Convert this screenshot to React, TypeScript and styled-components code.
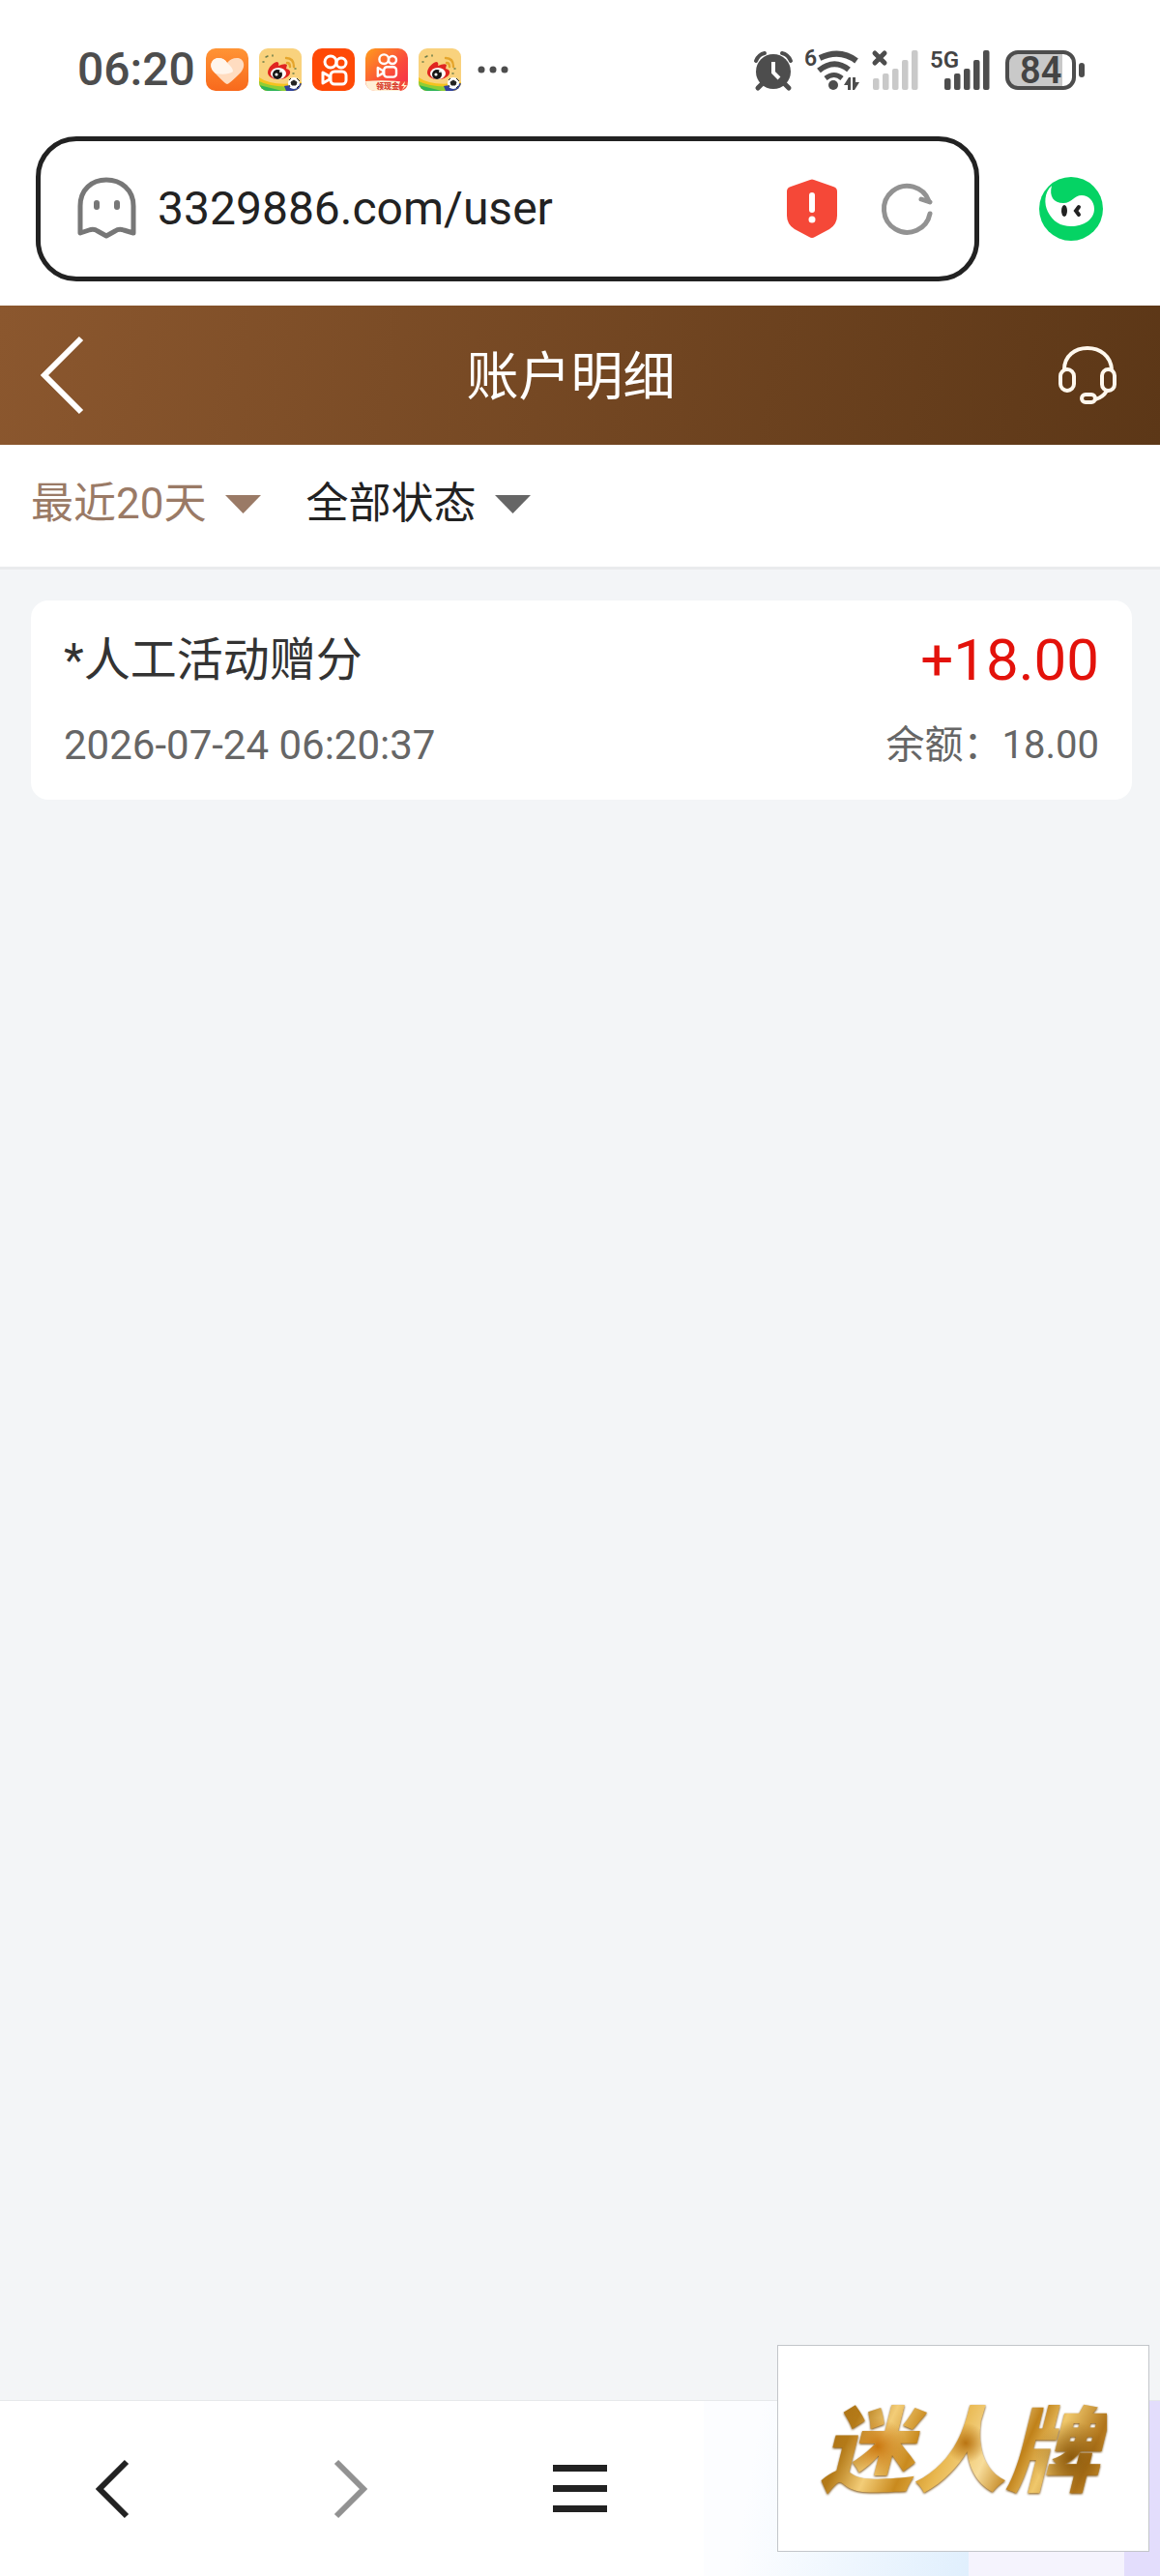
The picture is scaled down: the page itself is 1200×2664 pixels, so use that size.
import { useState } from "react";
import styled, { createGlobalStyle } from "styled-components";

const ink = "#4d4d4d";

const records = [
  { id: 1, title: "*人工活动赠分", amount: "+18.00", time: "2026-07-24 06:20:37", balance: "18.00" },
];

export default function App() {
  return (
    <Page>
      <GlobalStyle />
      <StatusBar />
      <AddressBar />
      <Header />
      <Filters />
      <List>
        {records.map((item) => (
          <Card key={item.id}>
            <CardRow>
              <CardTitle>{item.title}</CardTitle>
              <Amount>{item.amount}</Amount>
            </CardRow>
            <CardRow>
              <Time>{item.time}</Time>
              <Balance>余额：{item.balance}</Balance>
            </CardRow>
          </Card>
        ))}
      </List>
      <BottomNav />
      <FloatingLogo>
        <GoldText>迷人牌</GoldText>
      </FloatingLogo>
    </Page>
  );
}

function StatusBar() {
  return (
    <StatusRow>
      <AppIcons>
        <Clock>06:20</Clock>
        <HeartIcon />
        <WeiboIcon />
        <KuaishouIcon />
        <KuaishouLiteIcon />
        <WeiboIcon />
        <svg width="40" height="44" viewBox="0 0 40 44" fill={ink}>
          <circle cx="10" cy="22" r="3.5" />
          <circle cx="22" cy="22" r="3.5" />
          <circle cx="34" cy="22" r="3.5" />
        </svg>
      </AppIcons>
      <SystemIcons>
        <svg width="40" height="44" viewBox="0 0 40 44">
          <circle cx="20" cy="24" r="18" fill={ink} />
          <path d="M2 13Q5 6 11 5M29 5Q35 6 38 13" stroke={ink} strokeWidth="4" fill="none" strokeLinecap="round" />
          <path d="M8 37L4 41M32 37L36 41" stroke={ink} strokeWidth="5" strokeLinecap="round" />
          <path d="M20 14V25L26 31" stroke="#fff" strokeWidth="4" fill="none" />
        </svg>
        <svg width="56" height="44" viewBox="0 0 56 44">
          <IconText x="0" y="18" fontSize="23">6</IconText>
          <g stroke={ink} strokeWidth="6" fill="none">
            <path d="M16 10Q37 0 54 13" />
            <path d="M15 23Q31 10 46 22" />
            <path d="M22 31Q31 24 39 31" strokeWidth="5" />
          </g>
          <circle cx="30" cy="38" r="5" fill={ink} />
          <path d="M41 38L46 30H48V43H45V38ZM50 30H53V35H57L52 43H50Z" fill={ink} />
        </svg>
        <svg width="50" height="44" viewBox="0 0 50 44">
          <path d="M5 5L15 15M15 5L5 15" stroke={ink} strokeWidth="5" strokeLinecap="round" />
          <SignalBars x={3} color="#c9c9c9" />
        </svg>
        <svg width="66" height="44" viewBox="0 0 66 44">
          <IconText x="0" y="20" fontSize="24">5G</IconText>
          <SignalBars x={15} color={ink} />
        </svg>
        <svg width="82" height="44" viewBox="0 0 82 44">
          <rect x="3" y="4" width="56" height="37" rx="10" fill="#c9c9c9" />
          <rect x="50" y="4" width="9" height="37" fill="#c9c9c9" />
          <rect x="2" y="4" width="69" height="37" rx="11" fill="none" stroke={ink} strokeWidth="4" />
          <rect x="76" y="15" width="6" height="15" rx="3" fill={ink} />
          <IconText x="15" y="36" fontSize="38">84</IconText>
        </svg>
      </SystemIcons>
    </StatusRow>
  );
}

function SignalBars({ x, color }: { x: number; color: string }) {
  return (
    <g fill={color}>
      {[31, 26, 21, 12, 2].map((top, i) => (
        <rect key={top} x={x + i * 10} y={top} width="6.5" height={43 - top} rx="2" />
      ))}
    </g>
  );
}

function HeartIcon() {
  return (
    <svg width="44" height="44" viewBox="0 0 44 44">
      <defs>
        <linearGradient id="heartBg" x1="0" y1="0" x2="0" y2="1">
          <stop offset="0" stopColor="#ff9435" />
          <stop offset="1" stopColor="#f8691c" />
        </linearGradient>
      </defs>
      <rect width="44" height="44" rx="10" fill="url(#heartBg)" />
      <path d="M22 37Q20 37 8 24C2 17 7 10 13 10Q19 10 22 15Q26 10 32 10C39 10 42 18 36 25Q24 37 22 37Z" fill="#ffdcc0" />
      <path d="M22 15Q19 10 13 10C7 10 2 17 8 24L10 26Q22 28 28 24Q28 20 22 15Z" fill="#fff5ec" />
    </svg>
  );
}

function WeiboIcon() {
  return (
    <svg width="44" height="44" viewBox="0 0 44 44">
      <defs>
        <clipPath id="tile">
          <rect width="44" height="44" rx="9" />
        </clipPath>
      </defs>
      <g clipPath="url(#tile)">
        <rect width="44" height="44" fill="#f9d27d" />
        <path d="M0 30Q14 40 44 35V44H0Z" fill="#f5c21e" />
        <path d="M0 34Q14 41 36 39V44H0Z" fill="#8fce35" />
        <path d="M0 38Q12 41 24 44H0Z" fill="#2fb457" />
        <path d="M26 39L44 36V44H28Z" fill="#31439c" />
        <path d="M28 10Q36 10 36 19M29 15Q32 15 32 19" stroke="#e5a52c" strokeWidth="2.4" fill="none" strokeLinecap="round" />
        <path d="M7 9L9 8M14 8V7M4 14H5M37 21H38M35 26H36" stroke="#6b7d4a" strokeWidth="1.5" strokeLinecap="round" />
        <path d="M9 25C9 20 15 14 19 14Q21 15 20 18Q27 15 29 17L28 21Q33 22 32 26C30 31 24 32 19 32C14 32 9 29 9 25Z" fill="#e02521" />
        <ellipse cx="20" cy="26" rx="8" ry="6" fill="#fff" />
        <circle cx="19" cy="27" r="5" fill="#161616" />
        <circle cx="18" cy="27" r="1.6" fill="#fff" />
        <circle cx="22" cy="24" r="1" fill="#fff" />
        <circle cx="36" cy="36" r="6" fill="#fff" />
        <path d="M36 33L39 35L38 38H34L33 35ZM31 33L33 31M39 31L42 34M31 38L32 40M39 41L41 39" stroke="#222" strokeWidth="1" fill="#222" />
      </g>
    </svg>
  );
}

function KuaishouGlyph() {
  return (
    <g fill="none" stroke="#fff" strokeWidth="3" strokeLinejoin="round">
      <circle cx="19" cy="14" r="6" />
      <circle cx="30" cy="15" r="5" />
      <rect x="19" y="24" width="16" height="13" rx="4" />
      <path d="M11 25V36L18 32V29Z" />
    </g>
  );
}

function KuaishouIcon() {
  return (
    <svg width="44" height="44" viewBox="0 0 44 44">
      <rect width="44" height="44" rx="10" fill="#ff4906" />
      <KuaishouGlyph />
    </svg>
  );
}

function KuaishouLiteIcon() {
  return (
    <svg width="44" height="44" viewBox="0 0 44 44">
      <defs>
        <linearGradient id="liteBg" x1="0" y1="0" x2="1" y2="1">
          <stop offset="0" stopColor="#ff9d1c" />
          <stop offset="0.6" stopColor="#fa4a3c" />
          <stop offset="1" stopColor="#f52c50" />
        </linearGradient>
      </defs>
      <rect width="44" height="44" rx="10" fill="url(#liteBg)" />
      <g transform="translate(4 0) scale(0.8)">
        <KuaishouGlyph />
      </g>
      <path d="M0 34Q20 32 44 35Q44 44 34 44H10Q1 44 0 34Z" fill="#fff0d6" />
      <LiteText x="11" y="42">领现金</LiteText>
      <path d="M36 34H44Q44 43 36 44L34 40Z" fill="#f34a3a" />
      <path d="M41 34L37 39H40L38 43L43 38H40Z" fill="#fff2c9" />
    </svg>
  );
}

function AddressBar() {
  const [url, setUrl] = useState("3329886.com/user");

  return (
    <BrowserRow>
      <UrlBox>
        <svg width="61" height="64" viewBox="0 0 61 64">
          <path
            d="M3 58V30C3 13 15 3 30 3S58 13 58 30V58L48 55Q43 53 39 56L30 61L21 56Q17 53 12 55Z"
            fill="none"
            stroke="#777"
            strokeWidth="5"
            strokeLinejoin="round"
          />
          <rect x="17" y="24" width="6" height="10" rx="3" fill="#777" />
          <rect x="38" y="24" width="6" height="10" rx="3" fill="#777" />
        </svg>
        <UrlInput aria-label="网址" value={url} onChange={(e) => setUrl(e.target.value)} />
        <IconButton aria-label="安全提示">
          <svg width="52" height="61" viewBox="0 0 52 61">
            <path d="M24 1Q26 0 28 1L48 8Q52 9 52 13V38Q52 47 44 52L29 60Q26 62 23 60L8 52Q0 47 0 38V13Q0 9 4 8Z" fill="#f54838" />
            <path d="M26 17V32" stroke="#fff" strokeWidth="6" strokeLinecap="round" />
            <circle cx="26" cy="42" r="3.5" fill="#fff" />
          </svg>
        </IconButton>
        <IconButton aria-label="刷新">
          <svg width="53" height="54" viewBox="0 0 53 54" fill="none" stroke="#929292" strokeWidth="5" strokeLinecap="round">
            <path d="M50 33A24 24 0 1 1 49 20M41 18L50 21" strokeLinejoin="round" />
          </svg>
        </IconButton>
      </UrlBox>
      <IconButton aria-label="助手">
        <svg width="66" height="66" viewBox="0 0 66 66">
          <circle cx="33" cy="33" r="33" fill="#05d364" />
          <path d="M13 9C5 16 5 28 9 36C14 46 22 51 33 51C46 51 57 44 57 33C57 25 51 19 44 19C36 19 34 27 25 27C15 27 10 20 13 9Z" fill="#fff" />
          <ellipse cx="26" cy="35" rx="3" ry="6" fill="#222" />
          <path d="M41 31L38 35L41 39" stroke="#222" strokeWidth="4" fill="none" strokeLinecap="round" />
        </svg>
      </IconButton>
    </BrowserRow>
  );
}

function Header() {
  return (
    <HeaderBar>
      <IconButton aria-label="返回">
        <svg width="44" height="80" viewBox="0 0 44 80" fill="none" stroke="#fff" strokeWidth="6">
          <path d="M42 2L4 40L42 78" />
        </svg>
      </IconButton>
      <h1>账户明细</h1>
      <IconButton aria-label="客服">
        <svg width="60" height="60" viewBox="0 0 60 60" fill="none" stroke="#fff8ee" strokeWidth="4">
          <path d="M6 24C6 10 17 2 30 2S54 10 55 24" />
          <rect x="2" y="24" width="14" height="22" rx="7" />
          <rect x="45" y="24" width="13" height="22" rx="6.5" />
          <rect x="24" y="50" width="14" height="8" rx="4" />
          <path d="M50 46Q46 53 38 55" />
        </svg>
      </IconButton>
    </HeaderBar>
  );
}

function Filters() {
  const [days, setDays] = useState("20");
  const [status, setStatus] = useState("all");

  return (
    <FilterBar>
      <FilterField $color="#9a7a66">
        <select aria-label="时间" value={days} onChange={(e) => setDays(e.target.value)}>
          <option value="20">最近20天</option>
        </select>
        <Arrow />
      </FilterField>
      <FilterField $color="#222222" $arrow="#666666">
        <select aria-label="状态" value={status} onChange={(e) => setStatus(e.target.value)}>
          <option value="all">全部状态</option>
        </select>
        <Arrow />
      </FilterField>
    </FilterBar>
  );
}

function Arrow() {
  return (
    <svg width="37" height="19" viewBox="0 0 37 19">
      <path d="M0 0H37L18.5 19Z" fill="currentColor" />
    </svg>
  );
}

function BottomNav() {
  return (
    <NavBar>
      <IconButton aria-label="后退">
        <svg width="42" height="60" viewBox="0 0 42 60" fill="none" stroke="#222" strokeWidth="6">
          <path d="M32 2L4 30L32 58" />
        </svg>
      </IconButton>
      <IconButton aria-label="前进">
        <svg width="42" height="60" viewBox="0 0 42 60" fill="none" stroke="#929292" strokeWidth="6">
          <path d="M9 2L37 30L9 58" />
        </svg>
      </IconButton>
      <IconButton aria-label="菜单">
        <svg width="56" height="50" viewBox="0 0 56 50" fill="#222">
          <rect width="56" height="7" />
          <rect y="21" width="56" height="7" />
          <rect y="42" width="56" height="7" />
        </svg>
      </IconButton>
    </NavBar>
  );
}

const GlobalStyle = createGlobalStyle`
  * {
    box-sizing: border-box;
  }
  body {
    margin: 0;
    font-family: Roboto, "Noto Sans CJK SC", sans-serif;
    background-color: #f3f5f7;
  }
  svg {
    display: block;
    flex-shrink: 0;
    overflow: visible;
  }
`;

const Page = styled.div`
  position: relative;
  display: flex;
  flex-direction: column;
  min-height: 100vh;
`;

const StatusRow = styled.div`
  display: flex;
  justify-content: space-between;
  align-items: center;
  padding: 50px 78px 47px 80px;
  background-color: #fff;
`;

const AppIcons = styled.div`
  display: flex;
  align-items: center;
  gap: 11px;
`;

const SystemIcons = styled.div`
  display: flex;
  align-items: center;
  gap: 12px;
`;

const Clock = styled.span`
  color: ${ink};
  font-size: 48px;
  font-weight: 500;
  line-height: 44px;
`;

const IconText = styled.text`
  fill: #444;
  font-weight: 600;
`;

const LiteText = styled.text`
  fill: #d8402f;
  font-size: 8px;
  font-weight: 900;
`;

const BrowserRow = styled.div`
  display: flex;
  align-items: center;
  gap: 62px;
  padding: 0 59px 25px 37px;
  background-color: #fff;
`;

const UrlBox = styled.div`
  flex: 1;
  display: flex;
  align-items: center;
  height: 150px;
  padding: 0 43px 2px 38px;
  border: 5px solid #222;
  border-radius: 42px;
`;

const UrlInput = styled.input`
  flex: 1;
  min-width: 0;
  padding: 0;
  margin: 0 24px 0 22px;
  border: none;
  outline: none;
  background: none;
  color: #222;
  font-family: inherit;
  font-size: 48px;
`;

const IconButton = styled.button`
  display: flex;
  align-items: center;
  justify-content: center;
  padding: 0;
  border: none;
  background: none;
  cursor: pointer;

  & + & {
    margin-left: 46px;
  }
`;

const HeaderBar = styled.header`
  display: flex;
  align-items: center;
  justify-content: space-between;
  height: 144px;
  padding: 0 45px 0 42px;
  background: linear-gradient(100deg, #8b572e, #5c3717);

  h1 {
    margin: 0;
    padding-top: 6px;
    color: #fff;
    font-size: 54px;
    font-weight: 400;
    line-height: 80px;
  }
`;

const FilterBar = styled.div`
  display: flex;
  align-items: center;
  gap: 46px;
  height: 129px;
  padding: 0 32px 4px;
  background-color: #fff;
  border-bottom: 3px solid #eaebed;
`;

const FilterField = styled.label<{ $color: string; $arrow?: string }>`
  display: flex;
  align-items: center;
  gap: 20px;
  color: ${(props) => props.$arrow || props.$color};

  select {
    appearance: none;
    field-sizing: content;
    padding: 0;
    border: none;
    outline: none;
    background: none;
    color: ${(props) => props.$color};
    font-family: inherit;
    font-size: 44px;
    line-height: 64px;
  }
`;

const List = styled.main`
  flex: 1;
  padding: 32px 29px 32px 32px;
`;

const Card = styled.article`
  display: flex;
  flex-direction: column;
  gap: 18px;
  padding: 26px 34px 22px;
  border-radius: 18px;
  background-color: #fff;
`;

const CardRow = styled.div`
  display: flex;
  align-items: center;
  justify-content: space-between;
`;

const CardTitle = styled.h2`
  margin: 0;
  color: #333;
  font-size: 48px;
  font-weight: 400;
  line-height: 72px;
`;

const Amount = styled.span`
  color: #e3120b;
  font-size: 60px;
  line-height: 72px;
`;

const Time = styled.time`
  color: #666;
  font-size: 42px;
  line-height: 68px;
`;

const Balance = styled.span`
  color: #666;
  font-size: 40px;
  line-height: 68px;
`;

const NavBar = styled.nav`
  display: grid;
  grid-template-columns: repeat(5, 1fr);
  height: 182px;
  border-top: 1px solid #e6e8ea;
  background:
    linear-gradient(#e3ddfc, #e3ddfc) right / 37px 100% no-repeat,
    linear-gradient(#f5f3fd, #f5f3fd) right 37px top / 161px 100% no-repeat,
    linear-gradient(100deg, #fcfdff 20%, #e0effd) right 198px top / 274px 100% no-repeat,
    #fff;

  ${IconButton} {
    margin: 0;
  }
`;

const FloatingLogo = styled.div`
  position: absolute;
  right: 11px;
  bottom: 25px;
  display: flex;
  align-items: center;
  justify-content: center;
  width: 385px;
  height: 214px;
  padding: 8px 8px 0 0;
  border: 1px solid #c3c6ca;
  background-color: #fff;
`;

const GoldText = styled.span`
  padding: 0 8px;
  color: transparent;
  font-size: 96px;
  font-style: italic;
  font-weight: 900;
  line-height: 120px;
  background-image:
    radial-gradient(circle at 22% 45%, #c9760e, transparent 12%),
    radial-gradient(circle at 52% 42%, #b97412, transparent 12%),
    radial-gradient(circle at 88% 55%, #8d5a0c, transparent 14%),
    linear-gradient(115deg, #a56a10, #b47a18 16%, #f3cd78 26%, #c98a1e 36%, #e9b850 46%, #f7dc9a 58%, #c08119 68%, #f0c86c 76%, #b0741a 88%, #d9a43c);
  background-clip: text;
  -webkit-background-clip: text;
  filter: drop-shadow(0 1px 1px #7a4d0c);
`;
